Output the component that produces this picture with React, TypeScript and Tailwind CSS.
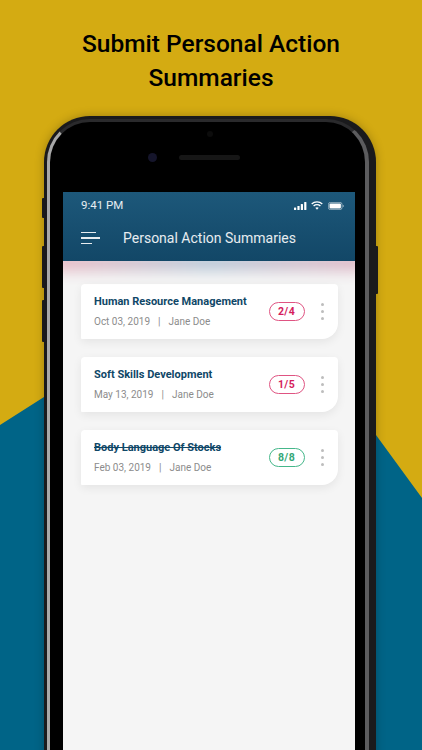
import React from 'react';

const cards = [
  { title: 'Human Resource Management', date: 'Oct 03, 2019', score: '2/4', done: false },
  { title: 'Soft Skills Development', date: 'May 13, 2019', score: '1/5', done: false },
  { title: 'Body Language Of Stocks', date: 'Feb 03, 2019', score: '8/8', done: true },
];

function StatusIcons() {
  return (
    <div className="flex items-center gap-[4px]">
      <svg width="13" height="8" viewBox="0 0 13 8" fill="white">
        <rect x="0" y="5.5" width="2.2" height="2.5" rx="0.5" />
        <rect x="3.4" y="4" width="2.2" height="4" rx="0.5" />
        <rect x="6.8" y="2" width="2.2" height="6" rx="0.5" />
        <rect x="10.2" y="0" width="2.2" height="8" rx="0.5" />
      </svg>
      <svg width="12" height="9" viewBox="0 0 12 9" fill="none" stroke="white" strokeWidth="1.3">
        <path d="M0.7 3 C3.6 0.2 8.4 0.2 11.3 3" />
        <path d="M2.6 5 C4.5 3.3 7.5 3.3 9.4 5" />
        <path d="M6 8.8 L4.3 6.8 C5.3 6 6.7 6 7.7 6.8 Z" fill="white" stroke="none" />
      </svg>
      <svg width="16" height="8" viewBox="0 0 16 8" fill="none" className="ml-[1px]">
        <rect x="0.4" y="0.4" width="13.6" height="7.2" rx="2" stroke="white" strokeOpacity="0.6" strokeWidth="0.8" />
        <rect x="1.5" y="1.5" width="11.4" height="5" rx="1" fill="white" />
        <path d="M14.8 2.8 C15.5 3 15.8 3.5 15.8 4 C15.8 4.5 15.5 5 14.8 5.2 Z" fill="white" fillOpacity="0.6" />
      </svg>
    </div>
  );
}

function MenuIcon() {
  return (
    <div className="flex flex-col gap-[4px]">
      <div className="h-[1.5px] w-[15px] bg-white/90" />
      <div className="h-[1.5px] w-[19px] bg-white/90" />
      <div className="h-[1.5px] w-[11px] bg-white/90" />
    </div>
  );
}

function Card({ title, date, score, done }: { title: string; date: string; score: string; done: boolean }) {
  return (
    <div className="flex h-[55px] items-center rounded-t-[4px] rounded-br-[16px] rounded-bl-[1px] bg-white pr-[14px] pl-[13px] shadow-[0_3px_10px_rgba(0,0,0,0.07)]">
      <div className="flex-1">
        <div className={`text-[11px] leading-[14px] font-bold text-[#0f4767] ${done ? 'line-through' : ''}`}>{title}</div>
        <div className="mt-[6px] flex text-[10px] leading-[14px] text-[#8c8c8c]">
          <span>{date}</span>
          <span className="mx-[8px]">|</span>
          <span>Jane Doe</span>
        </div>
      </div>
      <div
        className={`flex h-[19px] w-[36px] items-center justify-center rounded-full border text-[10.5px] font-bold tracking-[0.4px] ${
          done ? 'border-[#45b78a] text-[#35a878]' : 'border-[#df5482] text-[#d51c5c]'
        }`}
      >
        {score}
      </div>
      <div className="ml-[16px] flex flex-col gap-[3.5px]">
        <div className="size-[3.5px] rounded-full bg-[#bdbdbd]" />
        <div className="size-[3.5px] rounded-full bg-[#bdbdbd]" />
        <div className="size-[3.5px] rounded-full bg-[#bdbdbd]" />
      </div>
    </div>
  );
}

export default function App() {
  return (
    <div className="relative h-[750px] w-[422px] overflow-hidden bg-[#d4ab12] font-['Roboto',sans-serif]">
      {/* blue shape behind the phone */}
      <svg className="absolute inset-0" width="422" height="750" viewBox="0 0 422 750">
        <path d="M0 425 L44 397 L60 300 L360 300 L376 435 L422 498 L422 750 L0 750 Z" fill="#006487" />
      </svg>

      <div className="relative">
        <h1 className="mx-auto w-[300px] pt-[27px] text-center text-[24.5px] leading-[34px] font-medium text-black">
          Submit Personal Action Summaries
        </h1>

        {/* phone */}
        <div className="relative mt-[21px] ml-[44px] h-[700px] w-[332px] rounded-[46px] bg-[#1a1a1c] pt-[3px] pr-[7px] pb-[3px] pl-[3px] shadow-[0_0_10px_rgba(0,0,0,0.25)]">
          {/* side buttons */}
          <div className="absolute top-[82px] left-[-2px] h-[20px] w-[2px] rounded-l-[1px] bg-[#1a1a1c]" />
          <div className="absolute top-[130px] left-[-2px] h-[42px] w-[2px] rounded-l-[1px] bg-[#1a1a1c]" />
          <div className="absolute top-[184px] left-[-2px] h-[42px] w-[2px] rounded-l-[1px] bg-[#1a1a1c]" />
          <div className="absolute top-[130px] right-[-2px] h-[48px] w-[2px] rounded-r-[1px] bg-[#1a1a1c]" />

          <div className="relative h-full rounded-[43px] border-t-[3px] border-r-[4px] border-b-[3px] border-l-[3px] border-t-[#2a2a2c] border-r-[#5c5c5e] border-b-[#2a2a2c] border-l-[#a8a8a8] bg-black pt-[70px] pr-[10px] pl-[13px]">
            <div className="absolute top-[31px] left-[98px] size-[9px] rounded-full bg-[#15152b]" />
            <div className="absolute top-[33px] left-[129px] h-[5px] w-[61px] rounded-full bg-[#161616]" />
            <div className="absolute top-[9px] left-[157px] size-[6px] rounded-full bg-[#0c0c0c]" />

            <div className="h-full overflow-hidden bg-[#f5f5f5]">
              <div className="relative z-10 h-[69px] bg-gradient-to-b from-[#1d587a] to-[#124767] px-[18px] text-white">
                <div className="flex h-[26px] items-center justify-between pt-[1px]">
                  <span className="text-[11.5px] text-white/90">9:41 PM</span>
                  <div className="mr-[-7px]">
                    <StatusIcons />
                  </div>
                </div>
                <div className="mt-[8px] flex items-center">
                  <MenuIcon />
                  <span className="ml-[23px] text-[14px] leading-[24px] text-white/90">Personal Action Summaries</span>
                </div>
              </div>
              {/* blurred glow under the header */}
              <div className="mx-[-10px] mt-[-8px] h-[18px] bg-gradient-to-r from-[#e8b9c4] via-[#b9c9d8] to-[#e0b8c6] blur-[7px]" />
              <div className="flex flex-col gap-[18px] pt-[13px] pr-[17px] pl-[18px]">
                {cards.map((c) => (
                  <Card key={c.title} {...c} />
                ))}
              </div>
            </div>
          </div>
        </div>
      </div>
    </div>
  );
}
